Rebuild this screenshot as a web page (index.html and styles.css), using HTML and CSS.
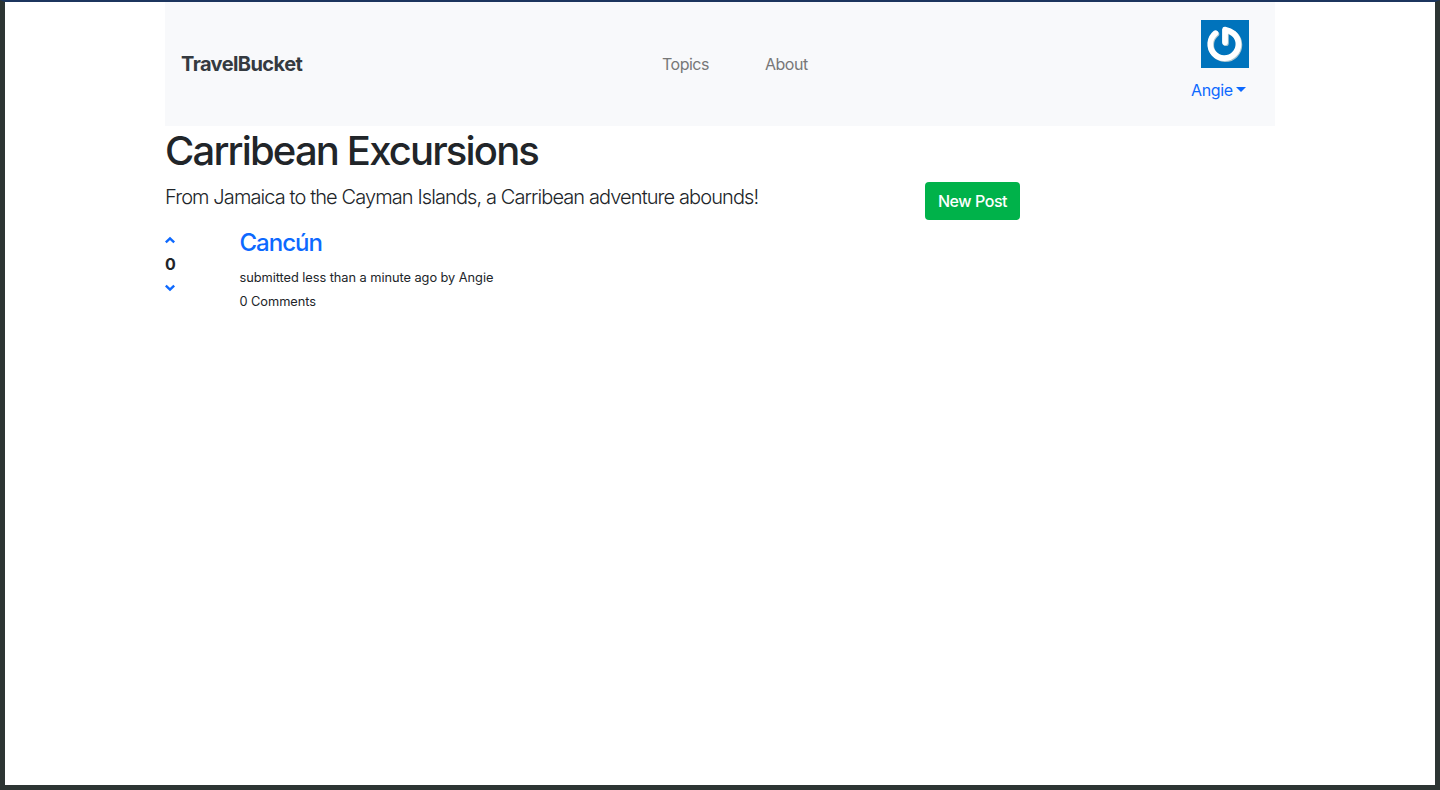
FILE: index.html
```html
<!DOCTYPE html>
<html lang="en">
<head>
<meta charset="utf-8">
<title>TravelBucket</title>
<link rel="stylesheet" href="styles.css">
</head>
<body>
<div class="container">
  <header class="navbar">
    <a class="brand">TravelBucket</a>
    <nav class="links"><a class="topics">Topics</a><a class="about">About</a></nav>
    <div class="user">
      <svg class="avatar" viewBox="0 0 48 48"><rect width="48" height="48" fill="#0073bc"/><g fill="none" stroke="#a9c6cf" stroke-width="5.8" stroke-linecap="round" stroke-linejoin="round" transform="translate(.9 .9)"><path d="M14.4 13.2A14.1 14.1 0 1 0 33 13.8Q29 10.4 24 9.6V22.3"/></g><g fill="none" stroke="#fff" stroke-width="5.8" stroke-linecap="round" stroke-linejoin="round"><path d="M14.4 13.2A14.1 14.1 0 1 0 33 13.8Q29 10.4 24 9.6V22.3"/></g></svg>
      <a class="name"><span>Angie</span><i class="caret"></i></a>
    </div>
  </header>
  <h1>Carribean Excursions</h1>
  <div class="intro">
    <p class="lead">From Jamaica to the Cayman Islands, a Carribean adventure abounds!</p>
    <a class="btn">New Post</a>
  </div>
  <article class="post">
    <div class="votes">
      <svg viewBox="0 0 10 24"><path d="M.8 14.4 5 10.4l4.2 4"/></svg>
      <strong>0</strong>
      <svg viewBox="0 0 10 24"><path d="M.8 9.6 5 13.6 9.2 9.6"/></svg>
    </div>
    <div class="body">
      <h2>Cancún</h2>
      <small class="submitted">submitted less than a minute ago by Angie</small>
      <small class="comments">0 Comments</small>
    </div>
  </article>
</div>
</body>
</html>
```
FILE: styles.css
```css
* { box-sizing: border-box; }
body {
  margin: 0;
  height: 790px;
  border: 5px solid #2d3533;
  border-top: 2px solid #1c355e;
  background: #fff;
  color: #212529;
  font: 16px/24px Inter, sans-serif;
}
.container { width: 1110px; margin: 0 auto; }
.navbar {
  display: grid;
  grid-template-columns: 481px 1fr 84px;
  height: 124px;
  padding-left: 16px;
  align-items: center;
  background: #f8f9fb;
}
.brand { font-size: 20px; font-weight: 700; color: #343a40; letter-spacing: -.58px; }
.links { display: flex; color: #777; letter-spacing: -.5px; }
.topics { width: 103px; }
.user { align-self: start; padding-top: 18px; color: #0d69ff; letter-spacing: -.35px; }
.avatar { display: block; width: 48px; height: 48px; margin: 0 0 10px 10px; }
.name { display: flex; align-items: center; }
.caret { border: 5px solid transparent; border-top-color: currentColor; border-bottom: 0; margin: 0 0 2px 3px; }
h1 { margin: 0; padding: 1px 0 7px; font-size: 40px; line-height: 48px; font-weight: 500; letter-spacing: -1.83px; }
.intro { display: flex; height: 38px; }
.lead { width: 760px; margin: 0; font-size: 20px; line-height: 30px; font-weight: 300; letter-spacing: -.9px; }
.btn { width: 95px; height: 38px; border-radius: 4px; background: #00b24a; color: #fff; line-height: 38px; text-align: center; font-weight: 500; letter-spacing: -.43px; }
.post { display: flex; padding-top: 8px; }
.votes { width: 74.5px; display: flex; flex-direction: column; }
.votes svg { width: 10px; height: 24px; fill: none; stroke: #0d69ff; stroke-width: 2.5; }
.body { display: flex; flex-direction: column; }
h2 { margin: 0 0 9px; font-size: 24px; line-height: 29px; font-weight: 500; color: #0d69ff; letter-spacing: -.98px; }
small { font-size: 12.8px; line-height: 24px; letter-spacing: -.05px; }
```
